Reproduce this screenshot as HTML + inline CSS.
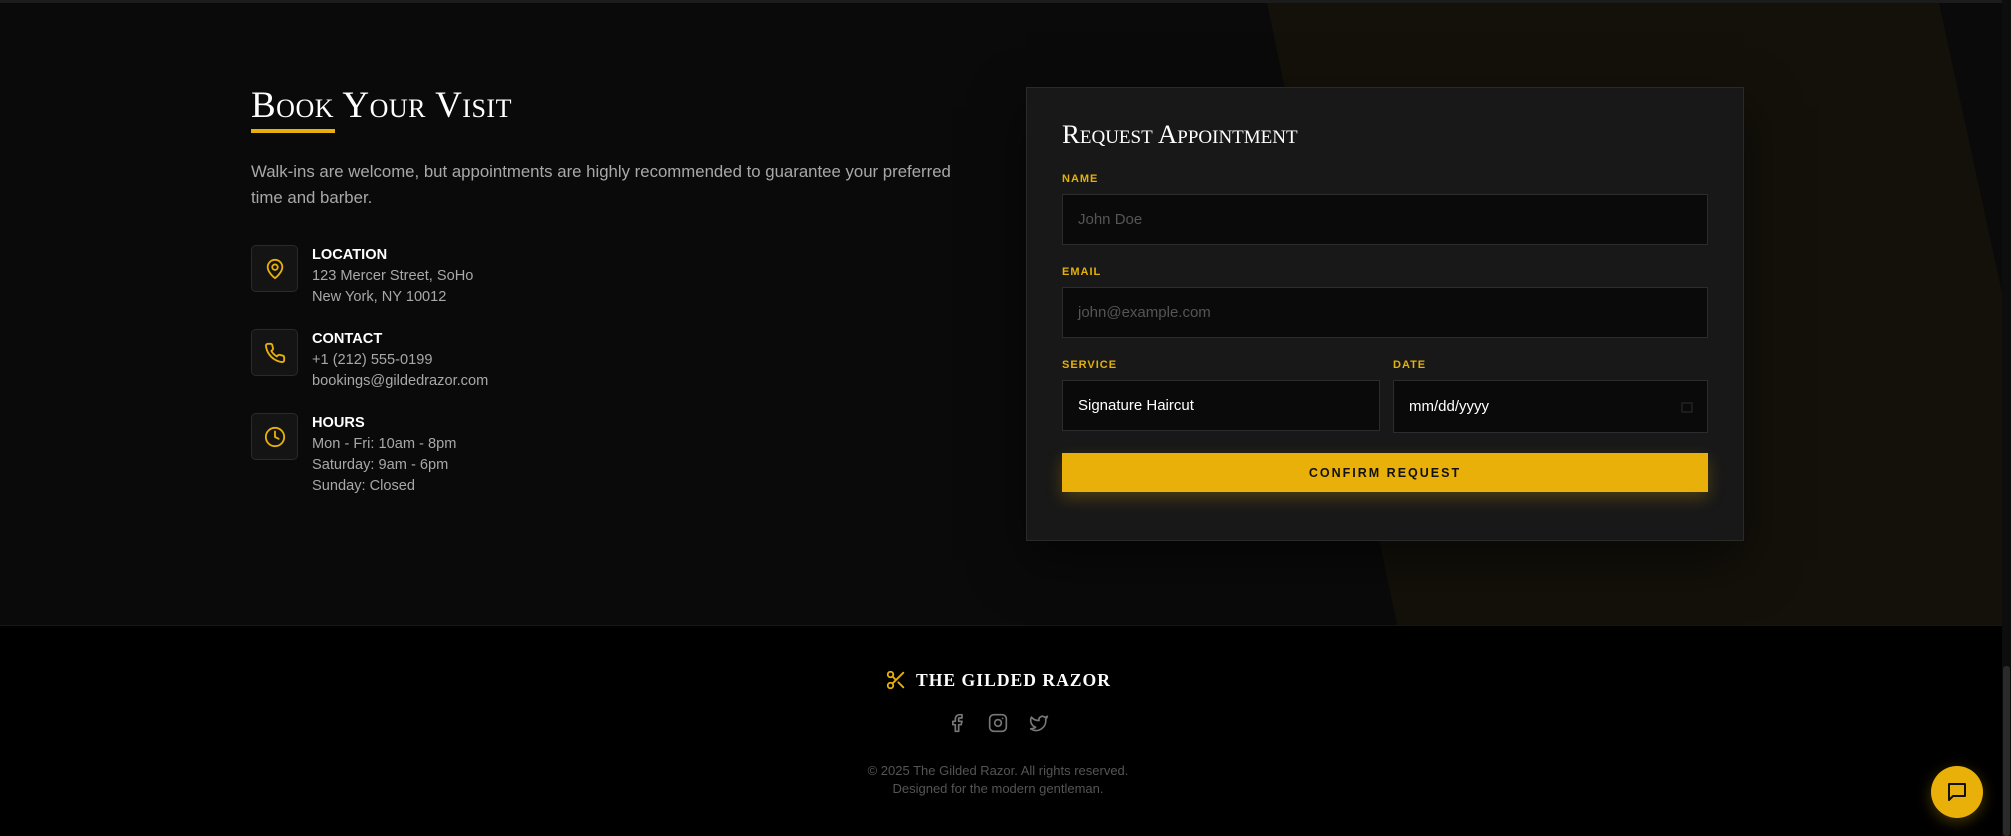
<!DOCTYPE html>
<html><head><meta charset="utf-8"><style>
*{margin:0;padding:0;box-sizing:border-box}
body{width:2011px;height:836px;overflow:hidden;background:#000;font-family:"Liberation Sans",sans-serif;position:relative}
.sec{position:absolute;left:0;top:0;width:2011px;height:626px;background:#0a0a0a;overflow:hidden;border-top:3px solid #1c1c1c;border-bottom:1px solid #161616}
.poly{position:absolute;left:0;top:0}
h2{position:absolute;left:251px;top:84px;font-family:"Liberation Serif",serif;font-weight:normal;font-variant:small-caps;color:#fff;font-size:37px;letter-spacing:0.5px;line-height:44px}
.ul{position:absolute;left:251px;top:129px;width:84px;height:4px;background:#e8b008}
.p{position:absolute;left:251px;top:159px;width:730px;color:#a8a8a8;font-size:16.8px;line-height:25.5px}
.box{position:absolute;left:251px;width:47px;height:47px;background:#141414;border:1px solid #2a2a2a;border-radius:5px;display:flex;align-items:center;justify-content:center}
.it{position:absolute;left:312px;color:#a8a8a8;font-size:14.6px;line-height:21px}
.it b{display:block;color:#fff;font-size:14.6px;line-height:21px}
.card{position:absolute;left:1026px;top:87px;width:718px;height:454px;background:#181818;border:1px solid #2a2a2a;box-shadow:0 20px 50px rgba(0,0,0,.5)}
.card h3{position:absolute;left:35px;top:31px;font-family:"Liberation Serif",serif;font-weight:normal;font-variant:small-caps;color:#fff;font-size:26.8px}
.lb{position:absolute;color:#e6b00a;font-size:11px;font-weight:bold;letter-spacing:1px}
.in{position:absolute;background:#0a0a0a;border:1px solid #2c2c2c;font-size:15px;color:#555;padding-left:15px;display:flex;align-items:center}
.btn{position:absolute;left:35px;top:365px;width:646px;height:39px;background:#e8b008;color:#111;font-size:12.5px;font-weight:bold;letter-spacing:2px;display:flex;align-items:center;justify-content:center;box-shadow:0 6px 16px rgba(232,176,8,.25)}
.logo{position:absolute;left:885px;top:669px;display:flex;align-items:center;gap:9px}
.logo span{font-family:"Liberation Serif",serif;font-weight:bold;color:#fff;font-size:17.6px;letter-spacing:1px}
.soc{position:absolute;top:713px}
.copy{position:absolute;left:0;width:1996px;text-align:center;color:#555;font-size:13px;line-height:18px;top:762px}
.chat{position:absolute;left:1931px;top:766px;width:52px;height:52px;border-radius:50%;background:#e8b008;display:flex;align-items:center;justify-content:center;box-shadow:0 4px 14px rgba(232,176,8,.3)}
.sb{position:absolute;left:2002px;top:0;width:9px;height:836px;background:#0d0d0d}
.sb i{position:absolute;left:1px;top:666px;width:7px;height:170px;background:#2a2a2a;border-radius:3px}
</style></head><body>
<div class="sec">
<svg class="poly" width="2011" height="626"><polygon points="1267,0 1939,0 2004,299 2011,330 2011,626 1398,626" fill="#14110a"/></svg>
</div>
<h2>Book Your Visit</h2>
<div class="ul"></div>
<div class="p">Walk-ins are welcome, but appointments are highly recommended to guarantee your preferred time and barber.</div>

<div class="box" style="top:245px"><svg width="22" height="22" viewBox="0 0 24 24" fill="none" stroke="#e8b008" stroke-width="2" stroke-linecap="round" stroke-linejoin="round"><path d="M20 10c0 6-8 12-8 12s-8-6-8-12a8 8 0 0 1 16 0Z"/><circle cx="12" cy="10" r="3"/></svg></div>
<div class="it" style="top:245px"><b>LOCATION</b>123 Mercer Street, SoHo<br>New York, NY 10012</div>

<div class="box" style="top:329px"><svg width="22" height="22" viewBox="0 0 24 24" fill="none" stroke="#e8b008" stroke-width="2" stroke-linecap="round" stroke-linejoin="round"><path d="M22 16.9v3a2 2 0 0 1-2.2 2 19.8 19.8 0 0 1-8.6-3.1 19.5 19.5 0 0 1-6-6A19.8 19.8 0 0 1 2.1 4.2 2 2 0 0 1 4.1 2h3a2 2 0 0 1 2 1.7c.1 1 .4 1.9.7 2.8a2 2 0 0 1-.5 2.1L8 9.800a16 16 0 0 0 6 6l1.3-1.3a2 2 0 0 1 2.1-.4c.9.3 1.8.6 2.8.7a2 2 0 0 1 1.7 2Z"/></svg></div>
<div class="it" style="top:329px"><b>CONTACT</b>+1 (212) 555-0199<br>bookings@gildedrazor.com</div>

<div class="box" style="top:413px"><svg width="22" height="22" viewBox="0 0 24 24" fill="none" stroke="#e8b008" stroke-width="2" stroke-linecap="round" stroke-linejoin="round"><circle cx="12" cy="12" r="10"/><path d="M12 6v6l4 2"/></svg></div>
<div class="it" style="top:413px"><b>HOURS</b>Mon - Fri: 10am - 8pm<br>Saturday: 9am - 6pm<br>Sunday: Closed</div>

<div class="card">
<h3>Request Appointment</h3>
<div class="lb" style="left:35px;top:85px">NAME</div>
<div class="in" style="left:35px;top:106px;width:646px;height:51px">John Doe</div>
<div class="lb" style="left:35px;top:178px">EMAIL</div>
<div class="in" style="left:35px;top:199px;width:646px;height:51px">john@example.com</div>
<div class="lb" style="left:35px;top:271px">SERVICE</div>
<div class="in" style="left:35px;top:292px;width:318px;height:51px;color:#fff">Signature Haircut</div>
<div class="lb" style="left:366px;top:271px">DATE</div>
<div class="in" style="left:366px;top:292px;width:315px;height:53px;color:#fff;justify-content:space-between;padding-right:14px">mm/dd/yyyy<svg width="12" height="12" viewBox="0 0 12 12"><rect x="1" y="2" width="10" height="9" fill="none" stroke="#222" stroke-width="1.5"/></svg></div>
<div class="btn">CONFIRM REQUEST</div>
</div>

<div class="logo"><svg width="22" height="22" viewBox="0 0 24 24" fill="none" stroke="#e8b008" stroke-width="2" stroke-linecap="round" stroke-linejoin="round"><circle cx="6" cy="6" r="3"/><circle cx="6" cy="18" r="3"/><path d="M20 4 8.1 15.9M14.5 14.5 20 20M8.1 8.1 12 12"/></svg><span>THE GILDED RAZOR</span></div>

<svg class="soc" style="left:947px" width="20" height="20" viewBox="0 0 24 24" fill="none" stroke="#777" stroke-width="2" stroke-linecap="round" stroke-linejoin="round"><path d="M18 2h-3a5 5 0 0 0-5 5v3H7v4h3v8h4v-8h3l1-4h-4V7a1 1 0 0 1 1-1h3z"/></svg>
<svg class="soc" style="left:988px" width="20" height="20" viewBox="0 0 24 24" fill="none" stroke="#777" stroke-width="2" stroke-linecap="round" stroke-linejoin="round"><rect x="2" y="2" width="20" height="20" rx="5"/><path d="M16 11.4A4 4 0 1 1 12.6 8 4 4 0 0 1 16 11.4z"/><path d="M17.5 6.5h.01"/></svg>
<svg class="soc" style="left:1029px" width="20" height="20" viewBox="0 0 24 24" fill="none" stroke="#777" stroke-width="2" stroke-linecap="round" stroke-linejoin="round"><path d="M22 4s-.7 2.1-2 3.4c1.6 10-9.4 17.3-18 11.6 2.2.1 4.4-.6 6-2C3 15.5.5 9.6 3 5c2.2 2.6 5.6 4.1 9 4-.9-4.2 4-6.6 7-3.8 1.1 0 3-1.2 3-1.2z"/></svg>

<div class="copy">© 2025 The Gilded Razor. All rights reserved.<br>Designed for the modern gentleman.</div>

<div class="chat"><svg width="24" height="24" viewBox="0 0 24 24" fill="none" stroke="#111" stroke-width="2" stroke-linejoin="round"><path d="M4 4h16v12H8l-4 4z"/></svg></div>
<div class="sb"><i></i></div>
</body></html>
